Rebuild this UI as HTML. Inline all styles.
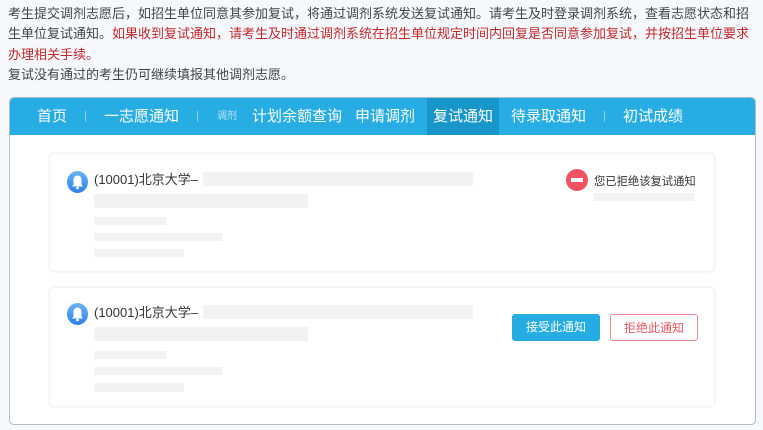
<!DOCTYPE html>
<html><head><meta charset="utf-8"><style>
*{margin:0;padding:0;box-sizing:border-box}
body{width:763px;height:430px;background:#f6f8fb;font-family:"Liberation Sans","Noto Sans CJK SC",sans-serif;color:#444;position:relative;overflow:hidden}
.intro{position:absolute;left:8px;top:4px;width:750px;font-size:13px;line-height:20.3px;color:#444}
.red{color:#c0282c}
.box{position:absolute;left:9px;top:97px;width:747px;height:328px;border:1px solid #b9bcc0;border-radius:5px;background:#fff;overflow:hidden}
.nav{height:37px;background:#27ade3;color:#fff;font-size:15px;position:relative}
.nav span{position:absolute;top:0;height:37px;line-height:37px}
.act{background:#1896c9;padding:0 6px}
.sep{color:#9fd8f0;font-size:11px}
.card{position:absolute;background:#fff;border-radius:4px;box-shadow:0 0 3px rgba(0,0,0,.14)}
.bar{position:absolute;background:#f2f2f2}
.bell{position:absolute;width:21px;height:22px;border-radius:50%;background:linear-gradient(#6ab4f7,#2e7fe8)}
.t{position:absolute;font-size:13px;color:#333;line-height:16px}
.btn{position:absolute;width:88px;height:27px;line-height:27px;text-align:center;font-size:12px;border-radius:3px}
</style></head><body>
<div class="intro">考生提交调剂志愿后，如招生单位同意其参加复试，将通过调剂系统发送复试通知。请考生及时登录调剂系统，查看志愿状态和招生单位复试通知。<span class="red">如果收到复试通知，请考生及时通过调剂系统在招生单位规定时间内回复是否同意参加复试，并按招生单位要求办理相关手续。</span><br>复试没有通过的考生仍可继续填报其他调剂志愿。</div>
<div class="box">
<div class="nav">
<span style="left:27px">首页</span><span class="sep" style="left:74px">|</span>
<span style="left:94px">一志愿通知</span><span class="sep" style="left:186px">|</span>
<span style="left:207px;font-size:10px;color:#bfe6f7">调剂</span>
<span style="left:242px">计划余额查询</span><span style="left:345px">申请调剂</span>
<span class="act" style="left:417px">复试通知</span>
<span style="left:501px">待录取通知</span><span class="sep" style="left:593px">|</span>
<span style="left:613px">初试成绩</span>
</div>
</div>
<div class="card" style="left:50px;top:154px;width:664px;height:117px"></div>
<div class="card" style="left:50px;top:288px;width:664px;height:118px"></div>

<svg class="bell" style="left:67px;top:171px" viewBox="0 0 21 22"><path d="M10.5 4.5c-2.8 0-4 2.2-4 4.5v4.5l-1.5 2h11l-1.5-2V9c0-2.3-1.2-4.5-4-4.5z" fill="#fff"/><circle cx="10.5" cy="17" r="1.4" fill="#fff"/></svg>
<div class="t" style="left:94px;top:172px">(10001)北京大学–</div>
<div class="bar" style="left:203px;top:172px;width:270px;height:14px"></div>
<div class="bar" style="left:94px;top:194px;width:214px;height:14px"></div>
<div class="bar" style="left:94px;top:217px;width:72px;height:8px"></div>
<div class="bar" style="left:94px;top:233px;width:128px;height:8px"></div>
<div class="bar" style="left:94px;top:249px;width:90px;height:8px"></div>
<div style="position:absolute;left:566px;top:169px;width:22px;height:22px;border-radius:50%;background:#f0525f"><div style="position:absolute;left:5px;top:9px;width:12px;height:4px;background:#fff"></div></div>
<div class="t" style="left:594px;top:174px;font-size:11.3px">您已拒绝该复试通知</div>
<div class="bar" style="left:594px;top:193px;width:100px;height:8px"></div>

<svg class="bell" style="left:67px;top:303px" viewBox="0 0 21 22"><path d="M10.5 4.5c-2.8 0-4 2.2-4 4.5v4.5l-1.5 2h11l-1.5-2V9c0-2.3-1.2-4.5-4-4.5z" fill="#fff"/><circle cx="10.5" cy="17" r="1.4" fill="#fff"/></svg>
<div class="t" style="left:94px;top:305px">(10001)北京大学–</div>
<div class="bar" style="left:203px;top:305px;width:270px;height:14px"></div>
<div class="bar" style="left:94px;top:327px;width:214px;height:14px"></div>
<div class="bar" style="left:94px;top:351px;width:72px;height:8px"></div>
<div class="bar" style="left:94px;top:367px;width:128px;height:8px"></div>
<div class="bar" style="left:94px;top:383px;width:90px;height:9px"></div>
<div class="btn" style="left:512px;top:314px;background:#25ade3;color:#fff">接受此通知</div>
<div class="btn" style="left:610px;top:314px;border:1px solid #ee8a90;color:#e5585f;background:#fff">拒绝此通知</div>
</body></html>
